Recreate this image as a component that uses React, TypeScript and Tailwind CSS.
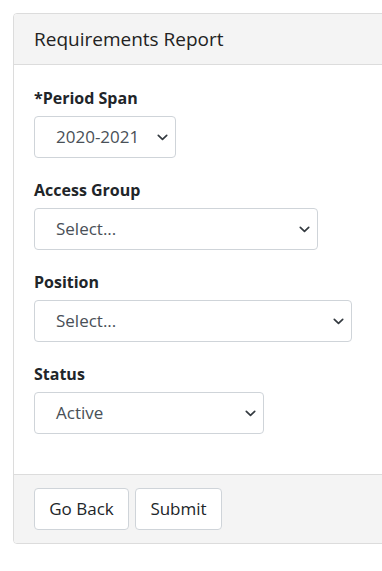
import React from "react";

function Chevron() {
  return (
    <svg width="11" height="7" viewBox="0 0 11 7" fill="none" className="shrink-0">
      <path d="M1.3 1.3L5.5 5.3L9.7 1.3" stroke="#343a40" strokeWidth="1.7" strokeLinecap="round" strokeLinejoin="round" />
    </svg>
  );
}

function FakeSelect({ value, width }: { value: string; width: string }) {
  return (
    <div
      className={`${width} h-[42px] flex items-center justify-between pl-[21px] pr-[7px] border border-[#cfd4d9] rounded-[4px] bg-white text-[17px] text-[#495057]`}
    >
      <span>{value}</span>
      <Chevron />
    </div>
  );
}

function Field({ label, value, width }: { label: string; value: string; width: string }) {
  return (
    <div className="mb-5">
      <div className="text-[16px] leading-[24px] font-bold text-[#212529] mb-[6px]">{label}</div>
      <FakeSelect value={value} width={width} />
    </div>
  );
}

export default function App() {
  return (
    <div
      className="w-[382px] h-[571px] overflow-hidden bg-white"
      style={{ fontFamily: '"Open Sans", "Noto Sans", sans-serif' }}
    >
      <div className="ml-[13px] mt-[13px] w-[390px] border border-[#dcdcdc] rounded-[4px] overflow-hidden">
        <div className="h-[51px] bg-[#f4f4f4] border-b border-[#dcdcdc] flex items-center px-5 text-[19px] text-[#222]">
          Requirements Report
        </div>
        <div className="pt-[21px] px-5 pb-5 bg-white">
          <Field label="*Period Span" value="2020-2021" width="w-[142px]" />
          <Field label="Access Group" value="Select..." width="w-[284px]" />
          <Field label="Position" value="Select..." width="w-[318px]" />
          <Field label="Status" value="Active" width="w-[230px]" />
        </div>
        <div className="bg-[#f4f4f4] border-t border-[#dcdcdc] px-5 py-[13px] flex gap-[6px]">
          <button className="h-[42px] w-[95px] bg-white border border-[#cfd4d9] rounded-[4px] text-[17px] text-[#212529]">
            Go Back
          </button>
          <button className="h-[42px] w-[87px] bg-white border border-[#cfd4d9] rounded-[4px] text-[17px] text-[#212529]">
            Submit
          </button>
        </div>
      </div>
    </div>
  );
}
